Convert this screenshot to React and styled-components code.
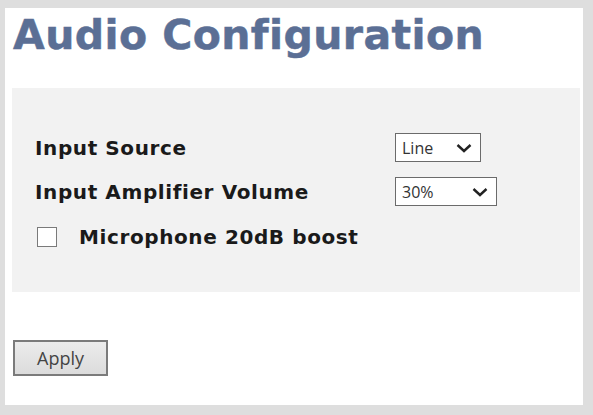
import React from "react";
import styled, { createGlobalStyle } from "styled-components";

const Global = createGlobalStyle`
  html, body { margin: 0; padding: 0; background: #ffffff; }
  #root { width: 593px; height: 415px; }
`;

const Frame = styled.div`
  box-sizing: border-box;
  width: 593px;
  height: 415px;
  background: #ffffff;
  border-style: solid;
  border-color: #dedede;
  border-width: 8px 10px 10px 5px;
  display: flex;
  flex-direction: column;
`;

const Title = styled.h1`
  margin: 0;
  height: 80px;
  padding: 3px 0 0 8px;
  box-sizing: border-box;
  font-family: "DejaVu Sans", Verdana, sans-serif;
  font-weight: bold;
  font-size: 41px;
  line-height: 48px;
  color: #5b6f95;
  letter-spacing: 0.4px;
  -webkit-text-stroke: 0.5px #5b6f95;
`;

const Panel = styled.div`
  margin: 0 3px 0 7px;
  height: 204px;
  box-sizing: border-box;
  background: #f2f2f2;
  padding: 45px 0 0 23px;
  display: grid;
  grid-template-columns: 360px auto;
  align-content: start;
  row-gap: 15px;
  align-items: center;
`;

const Label = styled.label`
  font-family: "DejaVu Sans", Verdana, sans-serif;
  font-weight: bold;
  font-size: 20px;
  letter-spacing: 0.6px;
  color: #1a1a1a;
`;

const Select = styled.div`
  box-sizing: border-box;
  width: ${(p) => p.$w}px;
  height: 29px;
  border: 1px solid #6b6b6b;
  background: #ffffff;
  display: flex;
  align-items: center;
  justify-content: space-between;
  padding: 0 8px 0 6px;
  font-family: "Open Sans", "Noto Sans", sans-serif;
  font-size: 16px;
  color: #333;
`;

const CheckRow = styled.div`
  grid-column: 1 / span 2;
  display: flex;
  align-items: center;
  gap: 22px;
  padding-left: 2px;
  margin-top: 4px;
`;

const Box = styled.span`
  box-sizing: border-box;
  width: 20px;
  height: 20px;
  border: 1px solid #7a7a7a;
  background: #ffffff;
`;

const Footer = styled.div`
  padding: 48px 0 0 8px;
`;

const Button = styled.button`
  box-sizing: border-box;
  width: 95px;
  height: 36px;
  border: 2px solid #7b7b7b;
  background: linear-gradient(#ececec, #dcdcdc);
  font-family: "Open Sans", "Noto Sans", sans-serif;
  font-size: 18px;
  color: #444;
  padding: 0;
`;

const Chevron = () => (
  <svg width="16" height="10" viewBox="0 0 16 10">
    <path d="M1.5 2 L8 8 L14.5 2" fill="none" stroke="#222" strokeWidth="2.4" />
  </svg>
);

export default function App() {
  return (
    <>
      <Global />
      <Frame>
        <Title>Audio Configuration</Title>
        <Panel>
          <Label>Input Source</Label>
          <Select $w={86}>
            <span>Line</span>
            <Chevron />
          </Select>
          <Label>Input Amplifier Volume</Label>
          <Select $w={102}>
            <span>30%</span>
            <Chevron />
          </Select>
          <CheckRow>
            <Box />
            <Label>Microphone 20dB boost</Label>
          </CheckRow>
        </Panel>
        <Footer>
          <Button>Apply</Button>
        </Footer>
      </Frame>
    </>
  );
}
